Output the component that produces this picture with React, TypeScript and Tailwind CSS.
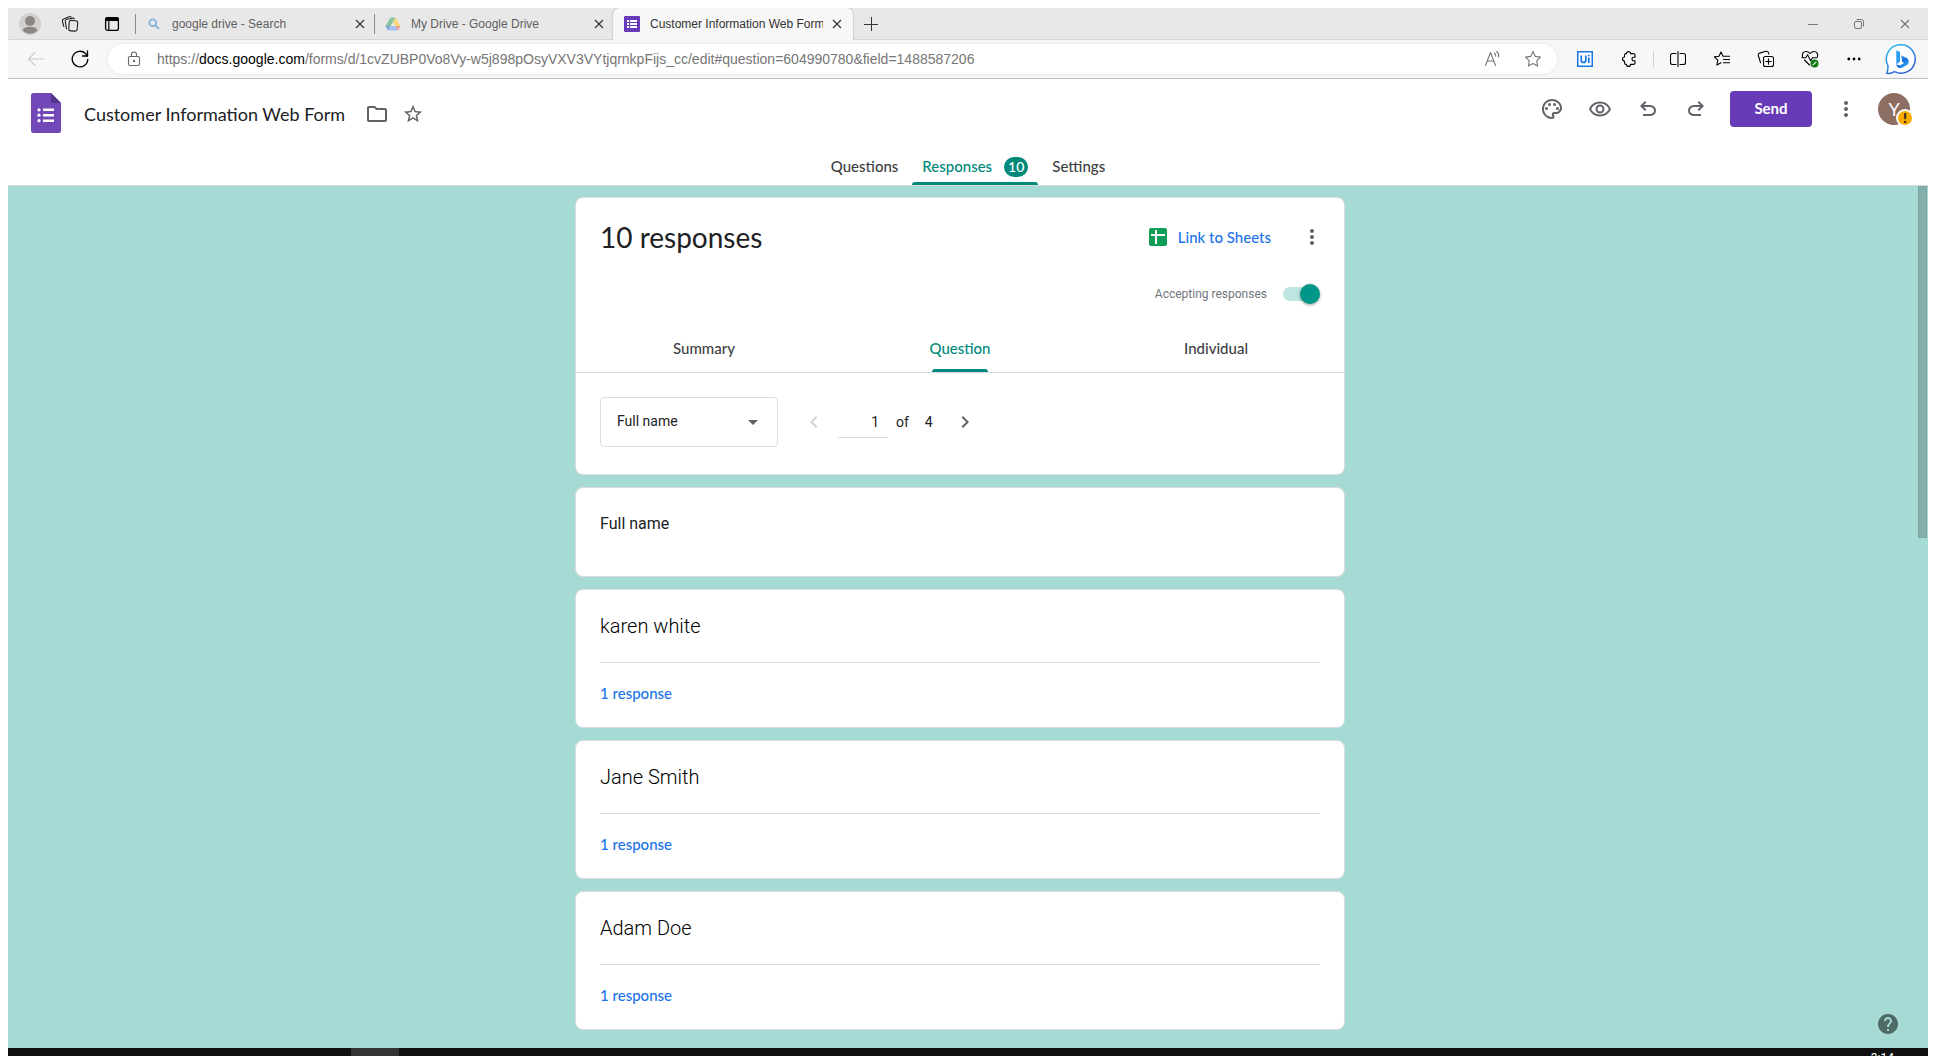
import type { ReactNode } from "react";
import {
  MdArrowDropDown,
  MdChevronLeft,
  MdChevronRight,
  MdHelp,
  MdMoreVert,
  MdOutlineFolder,
  MdOutlinePalette,
  MdOutlineRemoveRedEye,
  MdStarBorder,
} from "react-icons/md";

/* ---------- browser icons ---------- */

function Line({ children, size = 18, className = "" }: { children: ReactNode; size?: number; className?: string }) {
  return (
    <svg width={size} height={size} viewBox={`0 0 ${size} ${size}`} fill="none" stroke="currentColor" strokeWidth="1.1" strokeLinecap="round" strokeLinejoin="round" className={className} aria-hidden="true">
      {children}
    </svg>
  );
}

const ProfileIcon = () => (
  <svg width="22" height="22" viewBox="0 0 22 22" aria-hidden="true">
    <circle cx="11" cy="11" r="11" fill="#d2d0ce" />
    <circle cx="11" cy="8" r="5" fill="#8b8784" />
    <path d="M3.5 17.2c1-2.300 4-3.400 7.500-3.400s6.500 1.100 7.500 3.400a9.800 9.800 0 0 1-15 0z" fill="#8b8784" />
  </svg>
);

const WorkspacesIcon = () => (
  <Line>
    <rect x="8" y="5.500" width="8.500" height="10.500" rx="2" transform="rotate(4 12 10)" />
    <path d="M5.500 13.800 4.300 6.500a2 2 0 0 1 1.600-2.200l5.600-1.200a2 2 0 0 1 1.800.6" />
    <path d="M2.800 11.500 1.400 6.200a2 2 0 0 1 1.300-2.300L8.200 1.700a2 2 0 0 1 1.900.2" />
  </Line>
);

const TabActionsIcon = () => (
  <svg width="16" height="16" viewBox="0 0 16 16" aria-hidden="true">
    <rect x="1.600" y="1.600" width="12.800" height="12.800" rx="2.200" fill="none" stroke="#000" strokeWidth="1.300" />
    <path d="M1 3.500A2.500 2.500 0 0 1 3.500 1h9A2.500 2.500 0 0 1 15 3.500V5H1z" fill="#000" />
    <path d="M4.800 5v9.500" stroke="#000" strokeWidth="1.200" />
  </svg>
);

const SearchIcon = () => (
  <svg width="12" height="12" viewBox="0 0 12 12" fill="none" stroke="#7fb2de" strokeWidth="1.800" aria-hidden="true">
    <circle cx="4.800" cy="4.800" r="3.400" />
    <path d="m7.400 7.400 3.400 3.400" />
  </svg>
);

const DriveIcon = () => (
  <svg width="16" height="14" viewBox="0 0 16 14" aria-hidden="true">
    <path d="M5.500.5h5L8 5z" fill="#86c59c" />
    <path d="M5.500.5 8 5l-5 8.500L.5 9z" fill="#86c59c" />
    <path d="M10.500.5 15.500 9h-5L8 5z" fill="#fbd978" />
    <path d="M.5 9h5L3 13.500z" fill="#8aa9e0" />
    <path d="M5.500 9h5l2.500 4.500H3z" fill="#a3c3f5" />
    <path d="M10.500 9h5L13 13.500z" fill="#f09b92" />
  </svg>
);

const FormsFavicon = () => (
  <svg width="16" height="16" viewBox="0 0 16 16" aria-hidden="true">
    <rect width="16" height="16" rx="1" fill="#673ab7" />
    <path d="M3 4h2v2H3zm3 0h7v2H6zM3 7h2v2H3zm3 0h7v2H6zM3 10h2v2H3zm3 0h7v2H6z" fill="#fff" />
  </svg>
);

const CloseIcon = () => (
  <svg width="10" height="10" viewBox="0 0 10 10" stroke="currentColor" strokeWidth="1.200" aria-hidden="true">
    <path d="m1 1 8 8M9 1 1 9" />
  </svg>
);

const PlusIcon = () => (
  <svg width="14" height="14" viewBox="0 0 14 14" stroke="currentColor" aria-hidden="true">
    <path d="M7.500 0v14M0 7.500h14" />
  </svg>
);

const BackIcon = () => (
  <Line size={18}>
    <path d="M17 9H1.500M8 2.500 1.500 9 8 15.500" />
  </Line>
);

const RefreshIcon = () => (
  <Line size={18}>
    <path d="M16.800 9.500A7.800 7.800 0 1 1 14.500 3.500L16.500 6" strokeWidth="1.300" />
    <path d="M16.500 1v5h-5" strokeWidth="1.300" />
  </Line>
);

const LockIcon = () => (
  <Line size={16}>
    <rect x="2.500" y="5.500" width="11" height="9" rx="1.500" />
    <path d="M5.500 5.500V3.500a2.500 2.500 0 0 1 5 0v2" />
    <circle cx="8" cy="10" r=".6" fill="currentColor" />
  </Line>
);

const ReadAloudIcon = () => (
  <Line size={18}>
    <path d="M1.500 15.500 6.500 2.500l5 13M3.300 11h6.400" />
    <path d="M10.500 3.200c.9.700 1.300 1.700 1.200 3M12.700 1.500c1.600 1.300 2.300 3.300 2 5.500" />
  </Line>
);

const FavoriteIcon = () => (
  <Line>
    <path d="M9 1.500l2.300 4.900 5.200.7-3.800 3.700 1 5.300L9 13.500l-4.700 2.600 1-5.300L1.500 7.100l5.200-.7z" />
  </Line>
);

const UiPathIcon = () => (
  <svg width="16" height="16" viewBox="0 0 16 16" fill="none" stroke="#1677e8" aria-hidden="true">
    <rect x="0" y="0" width="16" height="16" fill="#1677e8" stroke="none" />
    <rect x="1.500" y="1.500" width="13" height="13" fill="#fff" stroke="none" />
    <path d="M4.200 4.500v4.700a2.300 2.300 0 0 0 4.600 0V4.500M11.800 6.500v5.500" strokeWidth="1.700" />
    <path d="M11.800 3.800v1.500" strokeWidth="1.700" />
  </svg>
);

const ExtensionsIcon = () => (
  <Line size={16}>
    <path d="M5.500 2.600a2 2 0 0 1 4 0h3a1.500 1.500 0 0 1 1.500 1.500v2.100h-1.200a1.800 1.800 0 1 0 0 3.600H14v2.100a1.500 1.500 0 0 1-1.500 1.500h-3a2 2 0 0 1-4 0H5a1.500 1.500 0 0 1-1.500-1.500V10a2 2 0 0 1 0-4V4.100A1.500 1.500 0 0 1 5 2.600z" />
  </Line>
);

const SplitIcon = () => (
  <Line size={16}>
    <path d="M8 .5v15M6 2.500H2.500a2 2 0 0 0-2 2v7a2 2 0 0 0 2 2H6M10 2.500h3.500a2 2 0 0 1 2 2v7a2 2 0 0 1-2 2H10" />
  </Line>
);

const FavoritesIcon = () => (
  <Line>
    <path d="M10 6.200 8 2 6 6.200l-4.700.6 3.500 3.300-.9 4.900L8 12.700M10 6.200h6.500M10.500 9.500h6M10.500 12.800h6" />
  </Line>
);

const CollectionsIcon = () => (
  <Line>
    <rect x="6.500" y="6.500" width="10" height="10" rx="2" />
    <path d="M11.500 8.800v5.400M8.800 11.500h5.400M3.600 12.800 1.300 5.500a2 2 0 0 1 1.200-2.400L9 1.300a2 2 0 0 1 2.400 1.300l.4 1.400" />
  </Line>
);

const HealthIcon = () => (
  <svg width="18" height="18" viewBox="0 0 18 18" fill="none" stroke="currentColor" strokeWidth="1.100" strokeLinejoin="round" strokeLinecap="round" aria-hidden="true">
    <path d="M1.700 7C.5 4 2.300 1.500 5 1.500c1.800 0 3 .8 4 2 1-1.200 2.200-2 4-2 2.700 0 4.500 2.500 3.300 5.500M3.500 10l5 5" />
    <path d="M.8 7.800h4l1.800-3 3 6 1.900-3h4.500" />
    <circle cx="13.500" cy="13.500" r="4" fill="#0e7a0d" stroke="none" />
    <path d="m12 14.800 3-2.700" stroke="#fff" />
  </svg>
);

const DotsIcon = () => (
  <svg width="14" height="4" viewBox="0 0 14 4" fill="currentColor" aria-hidden="true">
    <circle cx="1.800" cy="2" r="1.400" />
    <circle cx="7" cy="2" r="1.400" />
    <circle cx="12.200" cy="2" r="1.400" />
  </svg>
);

const BingIcon = () => (
  <svg width="32" height="32" viewBox="0 0 32 32" aria-hidden="true">
    <defs>
      <linearGradient id="bubble" x1="0" y1="0" x2=".6" y2="1">
        <stop offset="0" stopColor="#2fc3ee" />
        <stop offset="1" stopColor="#2a5bd7" />
      </linearGradient>
      <linearGradient id="bing" x1="0" y1="0" x2="1" y2="1">
        <stop offset="0" stopColor="#1f9ff0" />
        <stop offset=".5" stopColor="#1b6fe0" />
        <stop offset="1" stopColor="#37c6f0" />
      </linearGradient>
    </defs>
    <path d="M16 1.800A14.200 14.200 0 1 1 9.500 28.600c-2.500 1.600-5 2-7.600 1.700 1-2.600 1.200-4.800 1-7.800A14.200 14.200 0 0 1 16 1.800z" fill="#fff" stroke="url(#bubble)" strokeWidth="1.500" />
    <path d="M11.300 7.300 15 8.900v9.500l-3.700 3z" fill="#2a9df4" />
    <path d="M16.300 12.600l5.200 2.500c2.700 1.400 3 4.500 1.300 6.400l-5.700 3.300c-2.900 1.400-5.800-.6-5.800-3.500l3.700 1.300 4.200-2.500-2-1.200z" fill="url(#bing)" />
  </svg>
);

/* ---------- Forms icons ---------- */

const FormsLogo = () => (
  <svg width="30" height="40" viewBox="0 0 30 40" aria-hidden="true">
    <path d="M2.500 0H20l10 10v27.500a2.500 2.500 0 0 1-2.500 2.500h-25A2.500 2.500 0 0 1 0 37.500v-35A2.500 2.500 0 0 1 2.500 0z" fill="#7248b9" />
    <path d="M20 0l10 10H20z" fill="#56368a" />
    <path d="M12 15.500h11v2.500H12zm0 5.500h11v2.500H12zm0 5.500h11v2.500H12z" fill="#fff" />
    <circle cx="8" cy="16.800" r="1.600" fill="#fff" />
    <circle cx="8" cy="22.200" r="1.600" fill="#fff" />
    <circle cx="8" cy="27.700" r="1.600" fill="#fff" />
  </svg>
);

const UndoIcon = () => (
  <svg width="24" height="24" viewBox="0 0 24 24" fill="currentColor" aria-hidden="true">
    <path d="M7 19v-2h7.100q1.575 0 2.738-1T18 13.500 16.838 11 14.100 10H7.800l2.600 2.600L9 14 4 9l5-5 1.400 1.400L7.800 8h6.300q2.425 0 4.163 1.575T20 13.500t-1.738 3.925T14.100 19z" />
  </svg>
);

const RedoIcon = () => (
  <svg width="24" height="24" viewBox="0 0 24 24" fill="currentColor" aria-hidden="true">
    <path d="M9.900 19q-2.425 0-4.163-1.575T4 13.500t1.738-3.925T9.900 8h6.300l-2.600-2.600L15 4l5 5-5 5-1.400-1.400 2.600-2.600H9.900q-1.575 0-2.738 1T6 13.500 7.163 16 9.900 17H17v2z" />
  </svg>
);

const SheetsIcon = () => (
  <svg width="18" height="18" viewBox="0 0 18 18" aria-hidden="true">
    <rect width="18" height="18" rx="2" fill="#0f9d58" />
    <path d="M6 2h2v4h8v2H8v8H6V8H2V6h4z" fill="#fff" />
  </svg>
);

/* ---------- shared pieces ---------- */

function IconButton({ label, className, children }: { label: string; className: string; children: ReactNode }) {
  return (
    <button type="button" aria-label={label} className={`flex shrink-0 items-center justify-center ${className}`}>
      {children}
    </button>
  );
}

function Tab({ icon, title, className = "" }: { icon: ReactNode; title: string; className?: string }) {
  return (
    <div className={`flex h-full items-center ${className}`}>
      <span className="flex w-4 shrink-0 justify-center">{icon}</span>
      <span className="ml-2.5 flex-1 overflow-hidden whitespace-nowrap">{title}</span>
      <IconButton label={`Close ${title}`} className="h-6 w-7 text-[#333333]">
        <CloseIcon />
      </IconButton>
    </div>
  );
}

function Card({ children, className = "" }: { children: ReactNode; className?: string }) {
  return <section className={`rounded-lg border border-[#dadce0] bg-white ${className}`}>{children}</section>;
}

const names = ["karen white", "Jane Smith", "Adam Doe"];
const google = "font-['Lato','Google_Sans',sans-serif]";

function BrowserChrome() {
  return (
    <div className="shrink-0 font-['Liberation_Sans',Arial,sans-serif]">
      <div className="flex h-8 items-center border-b border-[#d6d6d6] bg-[#e8e8e8] text-xs text-[#5f5f5f]">
        <IconButton label="Profile" className="w-11"><ProfileIcon /></IconButton>
        <IconButton label="Workspaces" className="w-9 text-[#222222]"><WorkspacesIcon /></IconButton>
        <IconButton label="Tab actions" className="w-[47px]"><TabActionsIcon /></IconButton>
        <span className="h-5 w-px bg-[#8a8a8a]" />
        <Tab icon={<SearchIcon />} title="google drive - Search" className="w-[238px] pl-2.5" />
        <span className="h-5 w-px bg-[#8a8a8a]" />
        <Tab icon={<DriveIcon />} title="My Drive - Google Drive" className="w-[238px] pl-2.5" />
        <div className="-mb-px h-8 w-60 rounded-t-md bg-[#f7f7f7] text-[#333333] shadow-[0_0_2px_rgba(0,0,0,0.35)] [clip-path:inset(0_-3px_0_-3px)]">
          <Tab icon={<FormsFavicon />} title="Customer Information Web Form" className="pl-[11px] pr-0.5" />
        </div>
        <IconButton label="New tab" className="w-9 text-[#333333]"><PlusIcon /></IconButton>
        <div className="ml-auto flex text-[#777777]">
          <IconButton label="Minimize" className="h-8 w-[46px]">
            <svg width="10" height="10" viewBox="0 0 10 10" stroke="currentColor" aria-hidden="true"><path d="M0 5.500h10" /></svg>
          </IconButton>
          <IconButton label="Restore" className="h-8 w-[46px]">
            <svg width="10" height="10" viewBox="0 0 10 10" fill="none" stroke="currentColor" aria-hidden="true">
              <rect x=".5" y="2.500" width="7" height="7" rx="1.500" />
              <path d="M2.500.5h4.500a2.500 2.500 0 0 1 2.500 2.500v4.500" />
            </svg>
          </IconButton>
          <IconButton label="Close window" className="h-8 w-[46px]"><CloseIcon /></IconButton>
        </div>
      </div>

      <div className="flex items-center border-b border-[#bdbdbd] bg-[#f7f7f7] pr-0.5 text-black">
        <IconButton label="Back" className="ml-1.5 w-11 text-[#cccccc]"><BackIcon /></IconButton>
        <IconButton label="Refresh" className="mr-1.5 w-11"><RefreshIcon /></IconButton>
        <div className="my-1 flex h-[30px] flex-1 items-center rounded-full bg-white shadow-[0_0_4px_rgba(0,0,0,0.08)]">
          <span className="ml-[18px] flex w-4 text-[#666666]"><LockIcon /></span>
          <a href="https://docs.google.com" className="ml-[15px] flex-1 overflow-hidden whitespace-nowrap text-sm text-[#767676]">
            https://<span className="text-black">docs.google.com</span>/forms/d/1cvZUBP0Vo8Vy-w5j898pOsyVXV3VYtjqrnkpFijs_cc/edit#question=604990780&amp;field=1488587206
          </a>
          <IconButton label="Read aloud" className="w-10 text-[#767676]"><ReadAloudIcon /></IconButton>
          <IconButton label="Add to favorites" className="mr-1 w-10 text-[#767676]"><FavoriteIcon /></IconButton>
        </div>
        <IconButton label="UiPath" className="ml-1.5 w-11"><UiPathIcon /></IconButton>
        <IconButton label="Extensions" className="w-11"><ExtensionsIcon /></IconButton>
        <span className="mx-0.5 h-4 w-px bg-[#cfcfcf]" />
        <IconButton label="Split screen" className="w-11"><SplitIcon /></IconButton>
        <IconButton label="Favorites" className="w-11"><FavoritesIcon /></IconButton>
        <IconButton label="Collections" className="w-11"><CollectionsIcon /></IconButton>
        <IconButton label="Browser essentials" className="w-11"><HealthIcon /></IconButton>
        <IconButton label="Settings and more" className="w-11"><DotsIcon /></IconButton>
        <IconButton label="Bing chat" className="w-[50px]"><BingIcon /></IconButton>
      </div>
    </div>
  );
}

function FormHeader() {
  return (
    <header className={`shrink-0 border-b border-[#dadce0] bg-white ${google}`}>
      <div className="flex h-[71px] items-start pl-[23px] pr-[18px]">
        <div className="flex items-center pt-3.5">
          <FormsLogo />
          <div className="ml-[23px] flex items-center pt-0.5">
            <h1 className="text-lg leading-6 text-[#202124]">Customer Information Web Form</h1>
            <IconButton label="Move to folder" className="ml-3.5 w-9 text-2xl text-[#5f6368]"><MdOutlineFolder /></IconButton>
            <IconButton label="Star" className="w-9 text-[22px] text-[#5f6368]"><MdStarBorder /></IconButton>
          </div>
        </div>
        <div className="ml-auto flex items-center pt-3 text-2xl text-[#5f6368]">
          <IconButton label="Customize theme" className="w-12"><MdOutlinePalette /></IconButton>
          <IconButton label="Preview" className="w-12"><MdOutlineRemoveRedEye /></IconButton>
          <IconButton label="Undo" className="w-12"><UndoIcon /></IconButton>
          <IconButton label="Redo" className="w-12"><RedoIcon /></IconButton>
          <button type="button" className="ml-2.5 h-9 w-[82px] rounded bg-[#673ab7] text-[15px] font-bold text-white">Send</button>
          <IconButton label="More" className="ml-2.5 w-12"><MdMoreVert /></IconButton>
          <button type="button" aria-label="Account" className="relative ml-2 flex size-8 items-center justify-center rounded-full bg-[#8d6e63] text-lg text-white">
            Y
            <span className="absolute -bottom-0.5 -right-1 flex size-[18px] items-center justify-center rounded-full border-2 border-white bg-[#f9ab00] text-sm font-black text-[#202124]">!</span>
          </button>
        </div>
      </div>
      <nav className="flex h-[35px] justify-center gap-1 text-[15px] font-medium text-[#3c4043]">
        <a href="#questions" className="flex items-center px-2.5 pb-0.5">Questions</a>
        <a href="#responses" className="relative flex items-center px-2.5 pb-0.5 text-[#00897b]">
          Responses
          <span className="ml-3 flex h-5 items-center rounded-full bg-[#00897b] px-1 text-sm leading-5 text-white">10</span>
          <span className="absolute inset-x-0 bottom-0 h-[3px] rounded-t bg-[#00897b]" />
        </a>
        <a href="#settings" className="flex items-center px-2.5 pb-0.5">Settings</a>
      </nav>
    </header>
  );
}

function SummaryCard() {
  return (
    <Card className="pb-[27px]">
      <div className="flex items-center pl-6 pr-3 pt-[19px]">
        <h2 className={`flex-1 text-[28px] leading-10 text-[#202124] ${google}`}>10 responses</h2>
        <a href="#sheets" className={`flex items-center gap-[11px] text-[15px] font-medium text-[#1a73e8] ${google}`}>
          <SheetsIcon />
          Link to Sheets
        </a>
        <IconButton label="Response options" className="ml-[21px] h-10 w-10 text-2xl text-[#5f6368]"><MdMoreVert /></IconButton>
      </div>
      <label className="ml-auto mr-6 mt-[25px] flex h-6 w-fit items-center text-xs text-[#70757a]">
        Accepting responses
        <input type="checkbox" defaultChecked className="peer sr-only" />
        <span className="ml-4 flex h-3.5 w-[37px] items-center justify-end rounded-full bg-[#bfe5e0]">
          <span className="size-5 shrink-0 rounded-full bg-[#009688] shadow-[0_1px_3px_rgba(0,0,0,0.4)]" />
        </span>
      </label>
      <div className={`mt-5 grid grid-cols-3 border-b border-[#dadce0] text-[15px] font-medium text-[#3c4043] ${google}`}>
        <button type="button" className="h-[46px] pb-0.5">Summary</button>
        <button type="button" className="relative h-[46px] pb-0.5 text-[#00897b]">
          Question
          <span className="absolute inset-x-[100px] bottom-0 h-[3px] rounded-t bg-[#00897b]" />
        </button>
        <button type="button" className="h-[46px] pb-0.5">Individual</button>
      </div>
      <div className="flex items-center pl-6 pt-6 text-sm text-[#202124]">
        <div className="relative">
          <select aria-label="Question" className="h-[50px] w-[178px] appearance-none rounded border border-[#dadce0] bg-white pb-0.5 pl-4">
            <option>Full name</option>
          </select>
          <MdArrowDropDown className="pointer-events-none absolute right-[13px] top-[13px] text-2xl text-[#5f6368]" />
        </div>
        <IconButton label="Previous question" className="ml-6 w-6 text-2xl text-[#d0d2d4]"><MdChevronLeft /></IconButton>
        <input aria-label="Question number" defaultValue="1" className="ml-3 h-8 w-[50px] border-b border-[#dadce0] pr-[9px] text-right" />
        <span className="ml-2">of</span>
        <span className="ml-4">4</span>
        <IconButton label="Next question" className="ml-5 w-6 text-2xl text-[#5f6368]"><MdChevronRight /></IconButton>
      </div>
    </Card>
  );
}

export default function App() {
  return (
    <div className="flex h-screen flex-col overflow-hidden bg-white px-2 pt-2 font-['Roboto',sans-serif]">
      <BrowserChrome />
      <FormHeader />
      <main className="relative min-h-0 flex-1 overflow-hidden bg-[#a6dbd5] pr-4">
        <div className="mx-auto flex max-w-[770px] flex-col gap-3 pt-[11px]">
          <SummaryCard />
          <Card className="px-6 pb-10 pt-6">
            <h3 className="text-base leading-6 text-[#202124]">Full name</h3>
          </Card>
          {names.map((name) => (
            <Card key={name} className="px-6">
              <p className="border-b border-[#dadce0] py-[22px] text-xl font-light text-black">{name}</p>
              <button type="button" className={`flex h-16 items-center pb-1 text-[15px] font-medium text-[#1a73e8] ${google}`}>1 response</button>
            </Card>
          ))}
        </div>
        <div className="absolute right-px top-0 h-[352px] w-[9px] border border-[#7ba5a1] bg-[#84b0ab]" />
        <button type="button" aria-label="Help" className="absolute bottom-3 right-7 text-2xl text-[#4f6b68]"><MdHelp /></button>
      </main>
      <footer className="flex h-2 shrink-0 items-start overflow-hidden bg-[#101010] text-xs text-white">
        <span className="ml-[343px] h-full w-12 bg-[#333333]" />
        <time className="ml-auto mr-[34px] pt-0.5">3:14</time>
      </footer>
    </div>
  );
}
